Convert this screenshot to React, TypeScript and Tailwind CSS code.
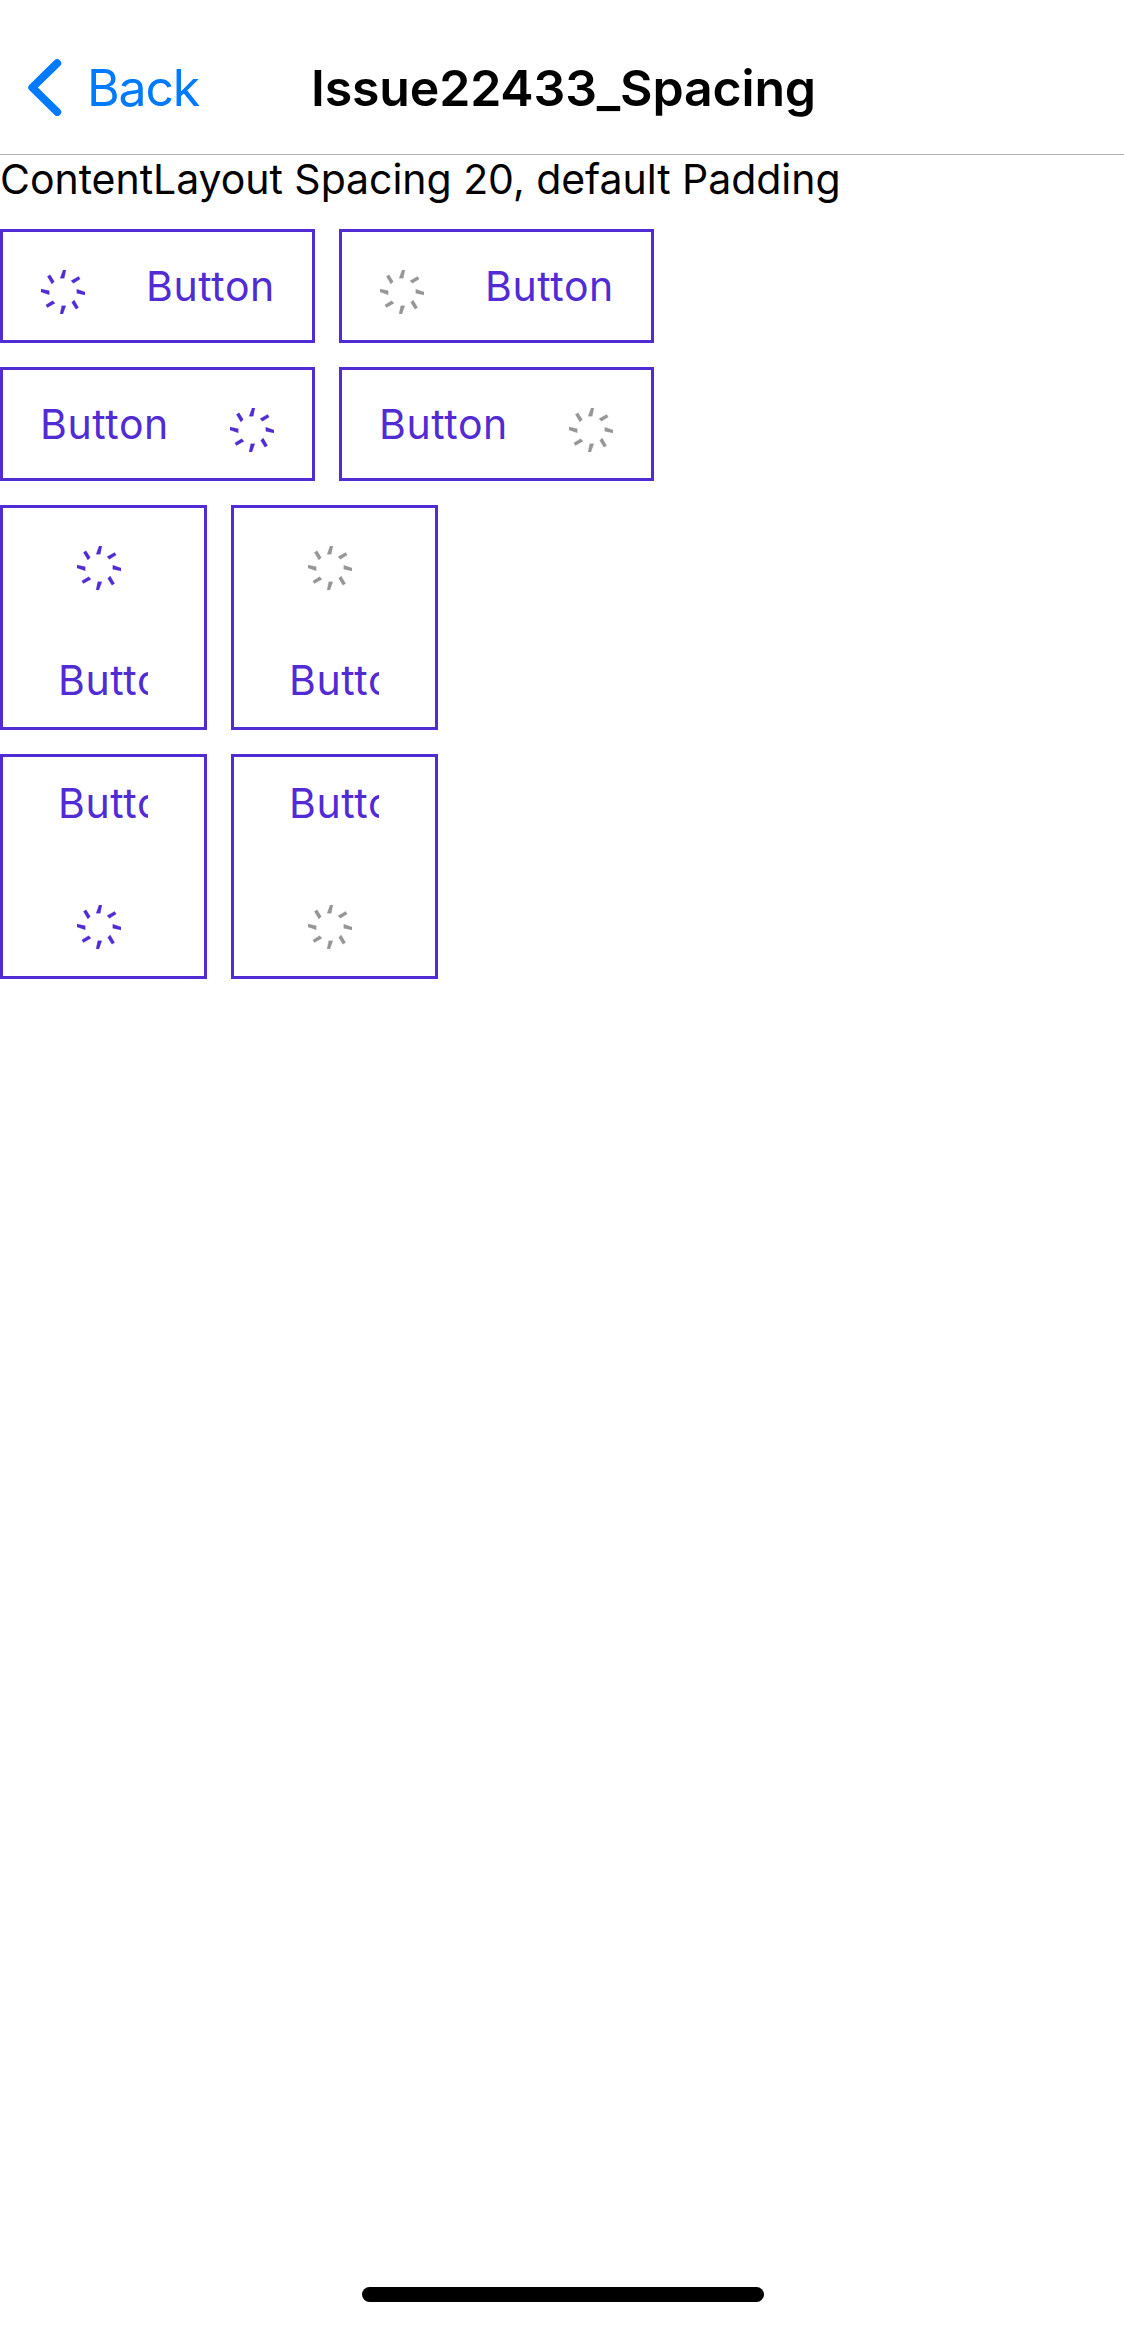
type Tone = "accent" | "muted";
type Placement = "left" | "right" | "top" | "bottom";

const TICK = "M22.1 0H24.9L23.2 8.2H19.2Z";
const DIAGONAL_TICK = "M37.6 6.4L39.2 9.1L32.4 13.3L30 10.8Z";

function Spinner({ tone, className }: { tone: Tone; className: string }) {
  return (
    <svg
      viewBox="0 0 44 44"
      className={`size-[44px] shrink-0 ${tone === "accent" ? "text-[#512bd4]" : "text-[#969696]"} ${className}`}
      fill="currentColor"
      stroke="currentColor"
      strokeWidth="0.3"
      aria-hidden="true"
    >
      {[0, 90, 180, 270].map((angle) => (
        <g key={angle} transform={`rotate(${angle} 22 22)`}>
          <path d={TICK} />
          <path d={DIAGONAL_TICK} />
        </g>
      ))}
    </svg>
  );
}

const label = "text-left text-[41px] leading-[50px] tracking-[0.6px] whitespace-nowrap";
const frame = "flex border-3 border-[#512bd4] text-[#512bd4]";

function ImageButton({ placement, tone }: { placement: Placement; tone: Tone }) {
  if (placement === "left") {
    return (
      <button className={`${frame} h-[114px] w-[315px] items-center gap-[61px] pl-[38px]`}>
        <Spinner tone={tone} className="mt-3" />
        <span className={label}>Button</span>
      </button>
    );
  }
  if (placement === "right") {
    return (
      <button className={`${frame} h-[114px] w-[315px] items-center justify-between pr-[38px] pl-[37px]`}>
        <span className={label}>Button</span>
        <Spinner tone={tone} className="mt-3" />
      </button>
    );
  }
  if (placement === "top") {
    return (
      <button className={`${frame} h-[225px] w-[207px] flex-col items-start gap-[65px] pt-[38px]`}>
        <Spinner tone={tone} className="ml-[74px]" />
        <span className={`${label} ml-[55px] w-[90px] overflow-hidden`}>Button</span>
      </button>
    );
  }
  return (
    <button className={`${frame} h-[225px] w-[207px] flex-col items-start gap-[77px] pt-[21px]`}>
      <span className={`${label} ml-[55px] w-[90px] overflow-hidden`}>Button</span>
      <Spinner tone={tone} className="ml-[74px]" />
    </button>
  );
}

const placements: Placement[] = ["left", "right", "top", "bottom"];

export default function App() {
  return (
    <div className="flex h-[2326px] w-[1124px] flex-col bg-white font-['Inter',sans-serif] text-black">
      <header className="grid h-[155px] grid-cols-[311px_1fr] border-b border-[#b3b3b3]">
        <a href="#" className="flex items-start pt-[58px] pl-[28px] text-[#007aff]">
          <svg viewBox="0 0 34 58" className="h-[58px] w-[34px] shrink-0" fill="none" aria-hidden="true">
            <path
              d="M29.2 5.2L4.3 29.5L29.2 54"
              stroke="currentColor"
              strokeWidth="8"
              strokeLinecap="round"
              strokeLinejoin="round"
            />
          </svg>
          <span className="ml-[25px] text-[50px] leading-[60px] tracking-[-1.2px]">Back</span>
        </a>
        <h1 className="pt-[58px] text-[50px] leading-[60px] font-semibold tracking-[-0.16px]">
          Issue22433_Spacing
        </h1>
      </header>

      <main className="flex flex-1 flex-col">
        <p className="text-[41px] leading-[48px] tracking-[-0.04px] whitespace-nowrap">
          ContentLayout Spacing 20, default Padding
        </p>
        <div className="mt-[26px] flex flex-col gap-6">
          {placements.map((placement) => (
            <div key={placement} className="flex gap-6">
              <ImageButton placement={placement} tone="accent" />
              <ImageButton placement={placement} tone="muted" />
            </div>
          ))}
        </div>
      </main>

      <footer className="flex justify-center pb-[24px] pl-[2px]">
        <div className="h-[15px] w-[402px] rounded-full bg-black" />
      </footer>
    </div>
  );
}
